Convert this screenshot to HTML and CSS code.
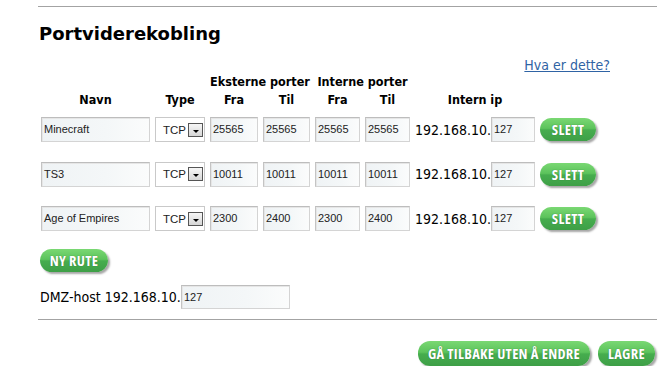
FILE: index.html
```html
<!DOCTYPE html>
<html>
<head>
<meta charset="utf-8">
<link rel="stylesheet" href="styles.css">
</head>
<body>
<div class="page">
  <h1 class="title">Portviderekobling</h1>
  <div class="help"><a href="#" class="help-link">Hva er dette?</a></div>

  <div class="grid head1">
    <div class="hd span-ext">Eksterne porter</div>
    <div class="hd span-int">Interne porter</div>
  </div>
  <div class="grid head2">
    <div class="hd">Navn</div>
    <div class="hd">Type</div>
    <div class="hd">Fra</div>
    <div class="hd">Til</div>
    <div class="hd">Fra</div>
    <div class="hd">Til</div>
    <div class="hd">Intern ip</div>
    <div></div>
  </div>

  <div class="grid row">
    <div class="field">Minecraft</div>
    <div class="select"><span>TCP</span><span class="drop"><i class="tri"></i></span></div>
    <div class="field">25565</div>
    <div class="field">25565</div>
    <div class="field">25565</div>
    <div class="field">25565</div>
    <div class="ip"><span class="ip-prefix">192.168.10.</span><span class="field ip-field">127</span></div>
    <div><span class="btn">SLETT</span></div>
  </div>

  <div class="grid row">
    <div class="field">TS3</div>
    <div class="select"><span>TCP</span><span class="drop"><i class="tri"></i></span></div>
    <div class="field">10011</div>
    <div class="field">10011</div>
    <div class="field">10011</div>
    <div class="field">10011</div>
    <div class="ip"><span class="ip-prefix">192.168.10.</span><span class="field ip-field">127</span></div>
    <div><span class="btn">SLETT</span></div>
  </div>

  <div class="grid row">
    <div class="field">Age of Empires</div>
    <div class="select"><span>TCP</span><span class="drop"><i class="tri"></i></span></div>
    <div class="field">2300</div>
    <div class="field">2400</div>
    <div class="field">2300</div>
    <div class="field">2400</div>
    <div class="ip"><span class="ip-prefix">192.168.10.</span><span class="field ip-field">127</span></div>
    <div><span class="btn">SLETT</span></div>
  </div>

  <div class="newroute"><span class="btn">NY RUTE</span></div>

  <div class="dmz"><span class="dmz-label">DMZ-host 192.168.10.</span><span class="field dmz-field">127</span></div>

  <div class="actions">
    <span class="btn btn-back">GÅ TILBAKE UTEN Å ENDRE</span>
    <span class="btn btn-save">LAGRE</span>
  </div>
</div>
</body>
</html>
```

FILE: styles.css
```css
html, body {
  margin: 0;
  padding: 0;
  background: #fff;
}
body {
  font-family: "DejaVu Sans", Verdana, sans-serif;
  font-stretch: condensed;
  color: #000;
}
.page {
  margin: 6px 5px 0 38px;
  width: 619px;
  border-top: 1px solid #a3a3a3;
}
.title {
  margin: 0;
  padding: 15px 0 0 1px;
  font-size: 18px;
  line-height: 24px;
  font-weight: bold;
  font-stretch: normal;
}
.help {
  text-align: right;
  padding-right: 47px;
  margin-top: 11px;
  font-size: 14px;
  line-height: 17px;
}
.help-link {
  color: #2f63a4;
  text-decoration: underline;
}
.grid {
  display: grid;
  grid-template-columns: 109px 50px 48px 47px 45px 45px 120px 57px;
  column-gap: 5px;
  padding-left: 3px;
}
.hd {
  font-size: 12.5px;
  font-weight: bold;
  text-align: center;
  line-height: 18px;
}
.head1 { margin-top: -1px; }
.span-ext { grid-column: 3 / 5; white-space: nowrap; }
.span-int { grid-column: 5 / 7; white-space: nowrap; }
.head2 { margin-bottom: 8px; }
.row {
  height: 25px;
  margin-bottom: 19.5px;
  align-items: center;
}
.field {
  box-sizing: border-box;
  height: 25px;
  border: 1px solid #d4d4d4;
  border-top-color: #bdbdbd;
  border-left-color: #c4c4c4;
  box-shadow: inset 1px 1px 0 #e6e6e6;
  background: linear-gradient(90deg, #eff3f5 0%, #f4f7f8 60%, #fbfcfc 100%);
  font-family: "Liberation Sans", Arial, sans-serif;
  font-stretch: normal;
  font-size: 11px;
  color: #222;
  line-height: 23px;
  padding-left: 2px;
  white-space: nowrap;
  overflow: hidden;
  display: block;
}
.select {
  box-sizing: border-box;
  height: 25px;
  border: 1px solid #c9c9c9;
  background: #fff;
  display: flex;
  align-items: center;
  justify-content: space-between;
  padding: 0 1px 0 7px;
  font-family: "Liberation Sans", Arial, sans-serif;
  font-stretch: normal;
  font-size: 11.5px;
  color: #222;
}
.drop {
  box-sizing: border-box;
  width: 15px;
  height: 14px;
  border: 1px solid #555;
  background: linear-gradient(#f6f6f6, #d6d6d6);
  display: flex;
  align-items: flex-end;
  justify-content: center;
  padding-bottom: 3px;
}
.tri {
  width: 0;
  height: 0;
  border-left: 3px solid transparent;
  border-right: 3px solid transparent;
  border-top: 3px solid #000;
}
.ip {
  display: flex;
  align-items: center;
}
.ip-prefix {
  font-size: 14px;
  width: 76px;
}
.ip-field {
  width: 44px;
}
.btn {
  display: inline-flex;
  align-items: center;
  justify-content: center;
  box-sizing: border-box;
  height: 23px;
  padding: 0 11px;
  border-radius: 12px;
  background: linear-gradient(#7ad873 0%, #5cc35c 45%, #46ad4e 52%, #3e9f47 100%);
  box-shadow: 2px 2px 2px rgba(0, 0, 0, 0.35);
  color: #fff;
  font-family: "Open Sans", "Liberation Sans", Arial, sans-serif;
  font-stretch: 75%;
  font-weight: bold;
  font-size: 14.5px;
  letter-spacing: 0.3px;
  text-shadow: 0 0 1px #2d6e2f;
  white-space: nowrap;
}
.row .btn {
  width: 56px;
  padding: 0;
}
.newroute {
  margin-top: -2px;
  padding-left: 2px;
}
.newroute .btn {
  width: 68px;
  padding: 0;
}
.dmz {
  display: flex;
  align-items: center;
  margin-top: 13px;
  padding-left: 2px;
  padding-bottom: 10px;
  border-bottom: 1px solid #a3a3a3;
}
.dmz-label {
  font-size: 14px;
  width: 141px;
}
.dmz-field {
  width: 109px;
  height: 24px;
}
.actions {
  display: flex;
  justify-content: flex-end;
  gap: 8px;
  margin-top: 21px;
  padding-right: 2px;
}
.actions .btn {
  height: 25px;
  padding: 0;
}
.btn-back { width: 172px; }
.btn-save { width: 57px; }
```
